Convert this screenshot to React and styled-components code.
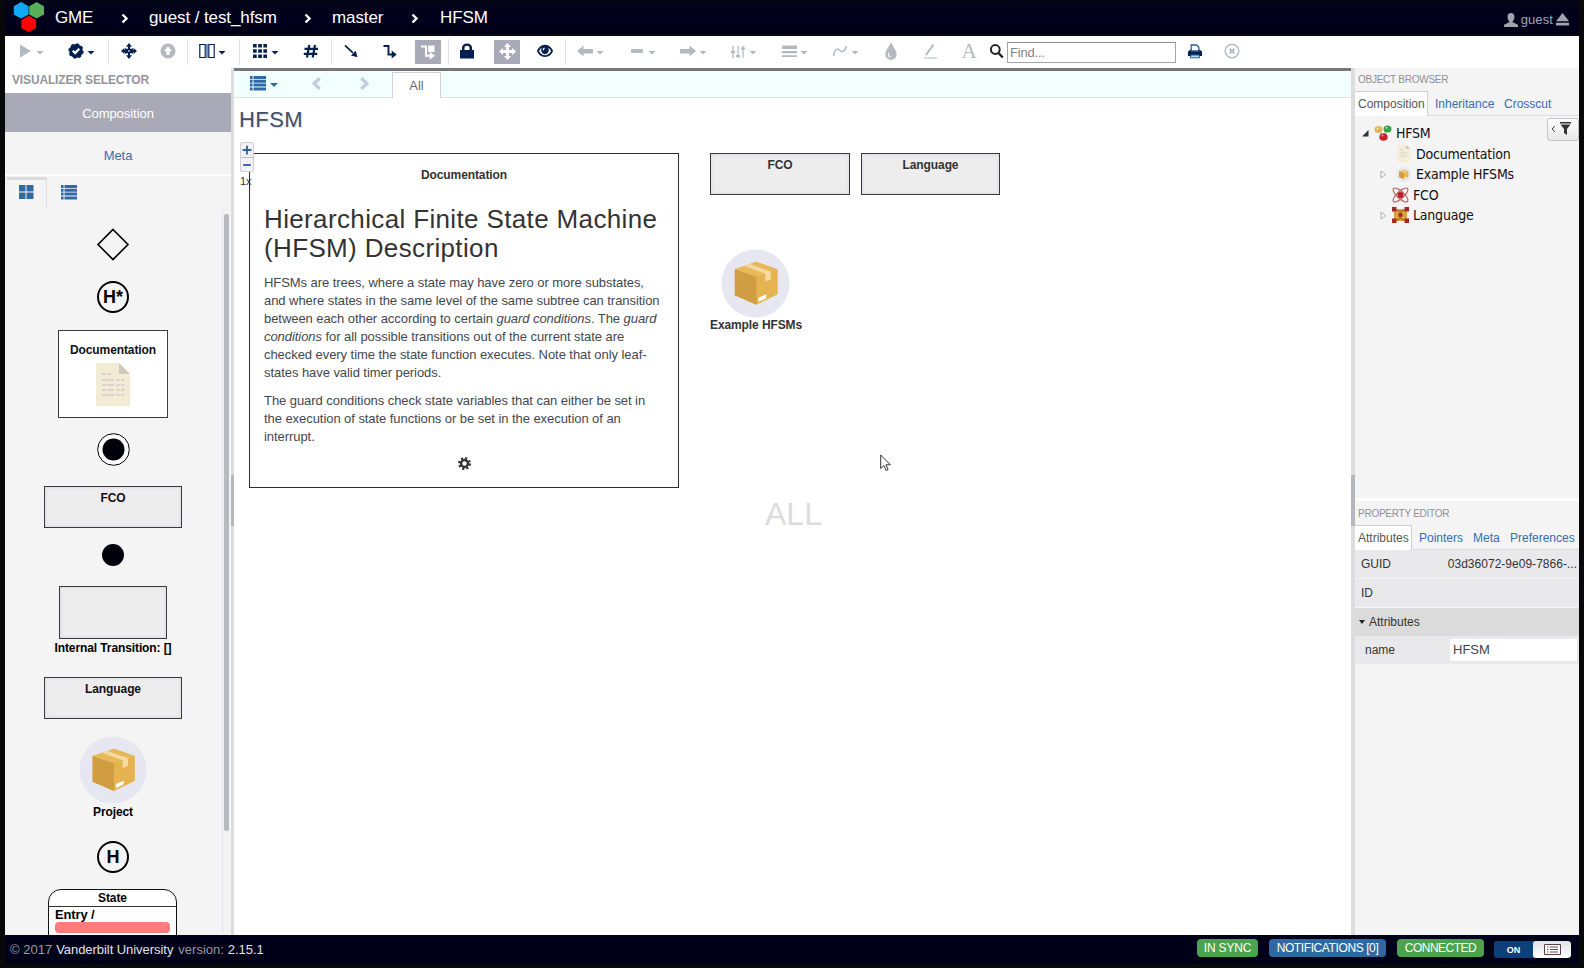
import React from "react";
import styled, { createGlobalStyle, css } from "styled-components";

const NAVY = "#04204f";
const LINK = "#3b6bb0";
const DIM = "#b4b9c1";

const GlobalStyle = createGlobalStyle`
  * { box-sizing: border-box; }
  body { margin: 0; background: #000; font-family: "Liberation Sans", Arial, sans-serif; font-size: 13px; color: #333; overflow: hidden; }
  svg { display: block; flex: none; }
`;

/* ---------- frame ---------- */
const Frame = styled.div`
  width: 1584px;
  height: 968px;
  padding: 0 5px 4px;
  background: #080808;
  display: flex;
  flex-direction: column;
`;

/* ---------- header ---------- */
const Header = styled.header`
  height: 36px;
  flex: none;
  background: linear-gradient(#030518, #00001c 60%, #000016);
  border-bottom: 2px solid #0c0c0c;
  display: flex;
  align-items: center;
  padding: 0 10px 0 8px;
  color: #fff;
`;
const Crumb = styled.span`
  font-size: 17px;
  line-height: 34px;
  padding-top: 1px;
  width: ${(p) => p.$w}px;
  letter-spacing: ${(p) => p.$ls || 0}px;
  margin-left: ${(p) => p.$gap}px;
  white-space: nowrap;
`;
const User = styled.div`
  margin-left: auto;
  display: flex;
  align-items: center;
  gap: 3px;
  padding-top: 5px;
  font-size: 13px;
  letter-spacing: 0.1px;
  color: #a3a3ad;
`;

/* ---------- main toolbar ---------- */
const Toolbar = styled.div`
  height: 32px;
  flex: none;
  background: #fff;
  display: flex;
  align-items: center;
  padding-bottom: 3px;
`;
const Tool = styled.div`
  display: flex;
  align-items: center;
  gap: 3px;
  margin-left: ${(p) => p.$gap}px;
  color: ${(p) => (p.$dim ? DIM : NAVY)};
  ${(p) =>
    p.$on &&
    css`
      width: 26px;
      height: 24px;
      justify-content: center;
      background: #a9a9b8;
      color: #fff;
      margin-top: 2px;
    `}
`;
const Caret = styled.i`
  width: 8px;
  height: 4px;
  margin-top: 4px;
  background: currentColor;
  clip-path: polygon(0 0, 100% 0, 50% 100%);
`;
const Sep = styled.div`
  width: 1px;
  height: 26px;
  margin-top: 3px;
  background: #dfdfea;
  margin-left: ${(p) => p.$gap}px;
`;
const Find = styled.div`
  width: 169px;
  height: 21px;
  margin: 3px 0 0 3px;
  border: 1px solid #a6a6a6;
  border-top-color: #8c8c8c;
  padding-left: 2px;
  line-height: 19px;
  font-size: 13px;
  letter-spacing: -0.2px;
  color: #7f8286;
`;

/* ---------- body ---------- */
const Body = styled.div`
  height: 867px;
  display: flex;
  flex: none;
`;
const Left = styled.aside`
  width: 226px;
  background: #f4f4f4;
  display: flex;
  flex-direction: column;
`;
const Splitter = styled.div`
  width: ${(p) => p.$w}px;
  background: #dcdcdc;
  padding-top: 407px;
  &::before {
    content: "";
    display: block;
    height: 51px;
    background: #b6b7bd;
  }
`;
const PanelHead = styled.div`
  height: 25px;
  line-height: 24px;
  background: #fff;
  padding-left: 7px;
  font-size: 12px;
  font-weight: bold;
  color: #94959b;
  letter-spacing: -0.15px;
`;
const VisItem = styled.div`
  height: ${(p) => (p.$on ? 39 : 42)}px;
  line-height: ${(p) => (p.$on ? 41 : 47)}px;
  text-align: center;
  font-size: 13px;
  letter-spacing: -0.05px;
  color: ${(p) => (p.$on ? "#fff" : LINK)};
  background: ${(p) => (p.$on ? "#a9a9b7" : "#f4f4f4")};
`;
const ViewTabs = styled.div`
  height: 35px;
  border-top: 2px solid #fff;
  display: flex;
  padding: 1px 0 0 2px;
  color: #326aa6;
`;
const ViewTab = styled.div`
  width: ${(p) => (p.$on ? 40 : 44)}px;
  display: flex;
  justify-content: center;
  padding-top: ${(p) => (p.$on ? 4 : 7)}px;
  ${(p) => p.$on && "border-top: 3px solid #dcdcdc; border-right: 1px solid #dedee6; padding-right: 1px;"}
`;
const PaletteRow = styled.div`
  flex: 1;
  display: flex;
  min-height: 0;
  overflow: hidden;
`;
const Palette = styled.div`
  width: 216px;
  display: flex;
  flex-direction: column;
  align-items: center;
  overflow: hidden;
  padding-top: 19px;
`;
const Track = styled.div`
  width: 9px;
  margin-left: 1px;
  padding: 5px 2px 0 1px;
  border-left: 1px solid #e6e3ee;
`;
const Thumb = styled.div`
  width: 5px;
  height: 617px;
  background: #b9bac0;
  border-radius: 2px;
`;
const Part = styled.div`
  flex: none;
  margin-top: ${(p) => p.$gap || 0}px;
  color: #000;
`;
const Label = styled.div`
  font-size: 12px;
  font-weight: bold;
  line-height: ${(p) => p.$lh || 14}px;
  text-align: center;
  white-space: nowrap;
  letter-spacing: -0.1px;
`;
const Tile = styled.div`
  flex: none;
  margin-top: ${(p) => p.$gap || 0}px;
  width: ${(p) => p.$w}px;
  height: ${(p) => p.$h}px;
  border: 1px solid #3a3a3c;
  background: #ededee;
  box-shadow: inset 0 0 3px 1px #dcdde2;
  padding-top: ${(p) => p.$pt ?? 4}px;
  color: inherit;
`;
const PaletteTile = styled(Tile)`
  color: #101014;
`;
const DocTile = styled(PaletteTile)`
  background: #fff;
  box-shadow: none;
  display: flex;
  flex-direction: column;
  align-items: center;
`;
const Ring = styled.div`
  flex: none;
  width: 32px;
  height: 32px;
  border-radius: 50%;
  border: 2px solid #000;
  margin-top: ${(p) => p.$gap}px;
  font-size: 18px;
  font-weight: bold;
  line-height: 28px;
  color: #000;
  display: flex;
  justify-content: center;
`;
const StateBox = styled.div`
  flex: none;
  width: 129px;
  height: 90px;
  margin-top: 16px;
  margin-right: 1px;
  border: 1px solid #111;
  border-radius: 13px 13px 0 0;
  background: #fff;
  color: #000;
`;
const StateHead = styled(Label)`
  height: 17px;
  line-height: 17px;
  border-bottom: 1px solid #333;
`;
const Entry = styled.div`
  padding: 1px 6px 0;
  font-size: 13px;
  font-weight: bold;
  letter-spacing: -0.15px;
  line-height: 14px;
`;
const EntryBar = styled.div`
  height: 11px;
  border-radius: 4px;
  background: #fe7b7b;
`;

/* ---------- center ---------- */
const Center = styled.main`
  flex: 1;
  background: #fff;
  display: flex;
  flex-direction: column;
  min-width: 0;
  border-top: 3px solid #77777c;
`;
const SubBar = styled.div`
  height: 27px;
  background: #f1ffff;
  border-bottom: 1px solid #e0e0f2;
  display: flex;
  flex: none;
  padding-left: 16px;
  color: #2f68a8;
`;
const SubTool = styled.div`
  display: flex;
  align-items: center;
  gap: 4px;
  height: 24px;
  margin-right: ${(p) => p.$gap}px;
  color: ${(p) => (p.$dim ? "#c3cbdc" : "inherit")};
`;
const AllTab = styled.div`
  width: 49px;
  height: 26px;
  margin-top: 1px;
  border: 1px solid #cfcfda;
  border-bottom: 0;
  background: #fff;
  text-align: center;
  line-height: 26px;
  font-size: 13px;
  color: #6a6a6a;
`;
const Canvas = styled.div`
  position: relative;
  flex: 1;
`;
const Title = styled.h1`
  margin: 0;
  padding: 8px 0 0 5px;
  font-size: 22px;
  line-height: 28px;
  font-weight: normal;
  letter-spacing: 0.4px;
  color: #445067;
  text-shadow: 1px 1px 1px #d5d8e2;
`;
const Node = styled.div`
  position: absolute;
  left: ${(p) => p.$x}px;
  top: ${(p) => p.$y}px;
`;
const DocNode = styled.article`
  width: 430px;
  height: 335px;
  border: 1px solid #2d2d2d;
  background: #fff;
  padding: 14px 14px 0 14px;
  display: flex;
  flex-direction: column;
`;
const DocHeading = styled.h2`
  margin: 23px 0 11px;
  font-size: 26px;
  line-height: 29px;
  font-weight: normal;
  color: #333;
  white-space: nowrap;
  letter-spacing: 0.36px;
`;
const Para = styled.p`
  margin: 0 0 11px;
  font-size: 13px;
  line-height: 17.9px;
  letter-spacing: -0.06px;
  color: #44474d;
  white-space: nowrap;
`;
const Gear = styled.div`
  display: flex;
  justify-content: center;
  margin-top: 0;
  color: #333;
`;
const ZoomBox = styled.div`
  width: 14px;
  border: 1px solid #cfcfd6;
  border-radius: 2px;
  background: #f2f2f6;
  color: #2f62a4;
`;
const ZoomKey = styled.div`
  height: 14px;
  display: flex;
  align-items: center;
  justify-content: center;
  & + & { border-top: 1px solid #bdbdc4; }
`;
const ZoomLevel = styled.span`
  font-size: 11px;
  line-height: 14px;
  color: #333;
`;
const Watermark = styled.span`
  font-size: 32px;
  line-height: 36px;
  color: #dcdcdc;
`;

/* ---------- right ---------- */
const Right = styled.aside`
  width: 224px;
  background: #f4f4f4;
  display: flex;
  flex-direction: column;
`;
const SmallHead = styled.div`
  height: 23px;
  line-height: 23px;
  padding-left: 3px;
  font-size: 10px;
  letter-spacing: -0.25px;
  color: #8f9096;
`;
const Tabs = styled.div`
  height: 25px;
  display: flex;
  border-bottom: 1px solid #dcdce0;
  font-size: 12px;
  line-height: 26px;
`;
const Tab = styled.div`
  color: ${(p) => (p.$on ? "#555" : LINK)};
  width: ${(p) => p.$w}px;
  padding-left: ${(p) => (p.$on ? 3 : 7)}px;
  white-space: nowrap;
  ${(p) => p.$on && "background:#fff; height:25px; border:1px solid #d0d0d4; border-left:0; border-bottom:0; line-height:24px;"}
`;
const Tree = styled.div`
  height: 382px;
  padding-top: 7px;
  position: relative;
`;
const TreeRow = styled.div`
  height: 20.5px;
  display: flex;
  align-items: center;
  padding-left: ${(p) => p.$in}px;
  font: 14px/20px "DejaVu Sans Condensed", "Noto Sans", sans-serif;
  letter-spacing: -0.2px;
  color: #111;
  svg { margin-right: ${(p) => p.$mr || 4}px; }
`;
const Expander = styled.i`
  width: 7px;
  height: 9px;
  margin-right: ${(p) => p.$mr || 5}px;
  display: flex;
  align-items: center;
  svg { margin: 0; }
`;
const FilterButton = styled.div`
  position: absolute;
  right: 0;
  top: 2px;
  width: 32px;
  height: 23px;
  border: 1px solid #c4c4c8;
  border-radius: 3px;
  background: linear-gradient(#fff, #e8e8e8);
  display: flex;
  align-items: center;
  justify-content: center;
  gap: 4px;
  padding: 0 4px 2px 0;
  color: #333;
`;
const PropHead = styled(SmallHead)`
  height: 27px;
  line-height: 25px;
  border-top: 3px solid #fff;
`;
const Prop = styled.div`
  height: ${(p) => (p.$group ? 28 : 29)}px;
  display: flex;
  align-items: center;
  padding: 0 2px ${(p) => (p.$group ? 0 : 1)}px ${(p) => p.$in || 6}px;
  background: ${(p) => (p.$group ? "#dbdbdb" : "#e9e9ec")};
  border-bottom: 1px solid ${(p) => (p.$group ? "#dbdbdb" : "#f6f6f6")};
  font-size: 12px;
  color: #333;
  gap: ${(p) => (p.$group ? 4 : 0)}px;
`;
const PropName = styled.div`
  width: ${(p) => p.$w}px;
`;
const PropValue = styled.div`
  flex: 1;
  white-space: nowrap;
  letter-spacing: 0.02px;
`;
const PropInput = styled.div`
  flex: 1;
  height: 22px;
  background: #fff;
  padding-left: 3px;
  line-height: 22px;
  font-size: 13px;
  color: #444;
`;

/* ---------- footer ---------- */
const Footer = styled.footer`
  height: 29px;
  flex: none;
  background: #000018;
  display: flex;
  align-items: center;
  padding: 0 8px 0 5px;
  color: #9a9aa4;
  font-size: 13px;
`;
const Strong = styled.span`
  color: #e3e3ea;
  margin: 0 5px 0 4px;
  letter-spacing: -0.05px;
`;
const Badge = styled.div`
  width: ${(p) => p.$w}px;
  height: 18px;
  margin: 0 ${(p) => p.$gap}px 3px 0;
  border-radius: 4px;
  background: ${(p) => (p.$blue ? "#3069a2" : "#4ba34d")};
  color: #fff;
  font-size: 12px;
  line-height: 18px;
  text-align: center;
  white-space: nowrap;
  letter-spacing: ${(p) => p.$ls || 0}px;
`;
const Badges = styled.div`
  margin-left: auto;
  display: flex;
  align-items: center;
`;
const Toggle = styled.div`
  display: flex;
  width: 77px;
  height: 17px;
  margin-bottom: 1px;
  border-radius: 3px;
  overflow: hidden;
  background: #0f3f78;
  color: #fff;
  font-size: 9px;
  font-weight: bold;
  line-height: 18px;
`;
const ToggleOn = styled.div`
  width: 39px;
  text-align: center;
`;
const ToggleKnob = styled.div`
  flex: 1;
  border-radius: 3px;
  background: linear-gradient(#e2e2e6, #fff);
  display: flex;
  align-items: center;
  justify-content: center;
`;

/* ---------- icons ---------- */
const I = ({ s = 16, children, ...r }) => (
  <svg width={s} height={s} viewBox="0 0 16 16" fill="currentColor" {...r}>{children}</svg>
);
const S = (p) => <I fill="none" stroke="currentColor" {...p} />;

const icons = {
  play: <I><path d="M3 1.500 14 8 3 14.500z" /></I>,
  check: <I><circle cx="8" cy="8" r="6.900" /><circle cx="8" cy="8" r="7" fill="none" stroke="currentColor" strokeWidth="1.400" strokeDasharray="2.750 2.750" /><path d="M4.800 7.800l2.300 2.300 4.200-4.300" fill="none" stroke="#fff" strokeWidth="2.200" /></I>,
  cross: <I><path d="M8 0l3 3.700H9v2.100h1.700L12.300 5V7H12.800V5.300L16 8l-3.200 2.700V9H12.300v2l-1.600-.8H9v2.100h2L8 16l-3-3.700h2v-2.100H5.300l-1.600.8V9H3.200v1.700L0 8l3.200-2.700V7h.5V5l1.600.8H7V3.700H5z" /><path d="M7.300 7.300h1.400v1.400H7.300z" fill="#fff" /></I>,
  up: <I><path fillRule="evenodd" d="M8 .5a7.500 7.500 0 1 0 0 15 7.500 7.500 0 0 0 0-15zM8 3.500l4 4.500H9.600v4H6.400V8H4z" /></I>,
  columns: <S strokeWidth="1.200"><path d="M.8 1.500h5.400v13H.8zM9.800 1.500h5.400v13H9.800z" /><path d="M8 1v14" strokeWidth="1.600" stroke="#4b7cab" /></S>,
  th: <I><path d="M1 1h3.700v3.600H1zM6.200 1h3.700v3.600H6.200zM11.400 1H15v3.600h-3.600zM1 6.200h3.700v3.600H1zM6.200 6.200h3.700v3.600H6.200zM11.400 6.200H15v3.600h-3.600zM1 11.400h3.700V15H1zM6.200 11.400h3.700V15H6.200zM11.400 11.400H15V15h-3.600z" /></I>,
  hash: <S strokeWidth="2.200"><path d="M6.300 2 4 14.500M12 2 9.700 14.500M1.500 5.800h13.500M.800 10.800h13.500" /></S>,
  arrow: <S strokeWidth="1.800"><path d="M2 2.300l8 7.500" /><path d="M14.500 14.200l-1.800-6.500-4.800 4.900z" fill="currentColor" stroke="none" /></S>,
  elbow: <S strokeWidth="1.900"><path d="M1.500 3h5v8.500H11" /><path d="M9.700 7.500l5 4-5 4z" fill="currentColor" stroke="none" /></S>,
  boxed: <S strokeWidth="2"><path d="M1 2.500h5v9.200h5" /><path d="M9.700 7.800l5.300 4-5.300 4z" fill="currentColor" stroke="none" /><path d="M8.200 1.500H14.500V8H8.200z" fill="currentColor" stroke="none" /></S>,
  lock: <I><path fillRule="evenodd" d="M1 7h2V4.500C3 2.200 5 .5 8 .5s5 1.700 5 4V7h2v8.500H1zM5.500 7h5V4.800C10.500 3.500 9.600 2.700 8 2.700S5.500 3.500 5.500 4.800z" /></I>,
  move: <I s={17}><path d="M8 0l3.400 3.700H9.300v3h3V4.600L16 8l-3.700 3.400V9.300h-3v3h2.100L8 16l-3.400-3.700h2.100v-3h-3v2.100L0 8l3.700-3.400v2.100h3v-3H4.600z" /></I>,
  eye: <I><path fillRule="evenodd" d="M8 1.800C4 1.800 1 5 0 8c1 3 4 6 8 6s7-3 8-6c-1-3-4-6.200-8-6.200zM2 8.200C2.500 7 3.500 5.600 4.700 4.800 4.200 6 4 7.500 4.500 8.800 5.200 10.400 6.500 11.300 8 11.300s2.800-.9 3.500-2.500c.5-1.300.3-2.800-.2-4C12.500 5.600 13.500 7 14 8.200c-1.200 2.300-3.300 4-6 4s-4.800-1.700-6-4zM7.500 4.500a2.500 2.500 0 0 0-1.700 3l1.200-.3c-.2-.8.200-1.500.9-1.800z" /></I>,
  left: <I><path d="M0 8l6.500-5.500V6H16v4.500H6.500v3z" /></I>,
  minus: <I><rect x="2" y="6" width="12" height="4" rx="1" /></I>,
  right: <I><path d="M16 8 9.500 2.500V6H0v4.500h9.500v3z" /></I>,
  sliders: <S strokeWidth="1.300"><path d="M3 3v12M8 3v12M13 3v12" /><path d="M1 9h4M6 13h4M11 5.500h4" strokeWidth="2.200" /></S>,
  lines: <I><path d="M1 2.500h15v3.500H1zM1 8h15v2.300H1zM1 12.300h15v1.700H1z" /></I>,
  curve: <S strokeWidth="1.500"><path d="M1.500 13C3 5 5.500 5 8 7.500S13 8 14.500 3" /></S>,
  tint: <I s={18}><path fillRule="evenodd" d="M8 0C9 4 13 6.500 13 11a5 5 0 0 1-10 0C3 6.500 7 4 8 0zM5.500 9.500C4.800 11 5.500 13.500 7.500 14V12.800C6.300 12.200 6 10.800 6.300 9.500z" /></I>,
  pencil: <S strokeWidth="2"><path d="M11.500 1.500 4 12" /><path d="M2 15h13" strokeWidth="1" /></S>,
  search: <S strokeWidth="2" stroke="#222"><circle cx="7.300" cy="6.500" r="4.400" /><path d="M10.500 10l4.300 4.500" strokeWidth="2.400" /></S>,
  print: <I><path d="M1 8.500 3.500 6.500h9L15 8.500V13H1z" /><path d="M4.200 8V2h5.300l2.300 2v4z" fill="#fff" stroke="#2c5f98" strokeWidth="1.300" /><path d="M4 12h8l.8 2.800H3.200z" fill="#b9d4ee" stroke="#2c5f98" /></I>,
  close: <S strokeWidth="1.500"><circle cx="8" cy="8" r="6.800" /><path d="M5.600 5.600l4.800 4.800M10.400 5.600l-4.800 4.800" strokeWidth="2" /></S>,
};
const ListIcon = () => (
  <I><path d="M0 1h2.600v3H0zM3.500 1H16v3H3.500zM0 4.800h2.600v3H0zM3.500 4.800H16v3H3.500zM0 8.600h2.600v3H0zM3.500 8.600H16v3H3.500zM0 12.400h2.600v3H0zM3.500 12.400H16v3H3.500z" /></I>
);
const Chevron = ({ flip }) => (
  <S s={13} strokeWidth="4"><path d={flip ? "M4 1.500 11 8l-7 6.500" : "M12 1.500 5 8l7 6.500"} /></S>
);
const CrumbArrow = styled.svg.attrs({ width: 8, height: 11, viewBox: "0 0 8 11", children: <path d="M1.500 1.500l4 4-4 4" fill="none" stroke="#fff" strokeWidth="2.400" /> })`
  margin: 2px 0 0 ${(p) => p.$gap}px;
`;
const hex = (cx, cy) =>
  `M${cx} ${cy - 8.2}l7.400 4.100v8.200l-7.400 4.100-7.400-4.100v-8.200z`;
const Logo = () => (
  <svg width="32" height="31" viewBox="0 0 32 31">
    <path d={hex(8.2, 8.3)} fill="#0fa8f5" />
    <path d={hex(23.6, 8.3)} fill="#58b158" />
    <path d={hex(15.8, 22)} fill="#fb0505" />
  </svg>
);
const Package = ({ s = 70 }) => (
  <svg width={s} height={s} viewBox="0 0 70 70">
    <circle cx="35" cy="35" r="34.500" fill="#e6e7f0" />
    <path d="M14 20.500 36 13l21.500 7.500V46L36 56.500 14 47z" fill="#e5b350" />
    <path d="M14 20.500 36 28v28.500L14 47z" fill="#d19d42" />
    <path d="M14 20.500 36 13l21.500 7.500L36 28z" fill="#e8b95a" />
    <path d="M23.500 17.300l5.500-2L50.500 23v8l-5.500 2v-8z" fill="#f5dba3" />
    <path d="M38 49.500l8-3.500v4l-8 3.500z" fill="#fff" />
  </svg>
);
const DocIcon = () => (
  <svg width="34" height="43" viewBox="0 0 34 43">
    <path d="M0 0h23l11 11v32H0z" fill="#f3ecd5" />
    <path d="M23 0l11 11H23z" fill="#d0c8bb" />
    <path d="M6 11h9M6 17h22M6 22h22M6 27h23M6 32h22" stroke="#d9d3d2" strokeWidth="2" strokeDasharray="4 1 7 2" />
  </svg>
);
const GearIcon = () => (
  <S s={13}><circle cx="8" cy="8" r="4.300" strokeWidth="3" /><circle cx="8" cy="8" r="6.700" strokeWidth="2.600" strokeDasharray="2.630 2.630" /></S>
);
const treeIcons = {
  root: <svg width="18" height="16" viewBox="0 0 18 16"><path d="M4 5l5 6 5-6" stroke="#999" fill="none" /><ellipse cx="4.500" cy="4.500" rx="4" ry="3.500" fill="#dfb45a" /><ellipse cx="13.500" cy="4" rx="4" ry="3.500" fill="#35a34a" /><ellipse cx="9.500" cy="12" rx="4.200" ry="3.800" fill="#c9202c" /><circle cx="8.500" cy="10.500" r="1" fill="#ff9c9c" /><circle cx="3.500" cy="3.500" r="1" fill="#fff0b8" /><circle cx="12.500" cy="2.800" r="1" fill="#b5efb5" /></svg>,
  doc: <svg width="13" height="17" viewBox="0 0 13 17"><path d="M0 0h9l4 4v13H0z" fill="#f4edd8" /><path d="M9 0l4 4H9z" fill="#c9c4c0" /><path d="M3 5h4M3 8h7M3 11h7" stroke="#d8d4cc" /></svg>,
  pack: <Package s={15} />,
  fco: <svg width="17" height="16" viewBox="0 0 17 16"><g fill="none" stroke="#b9666a" strokeWidth="1.200"><ellipse cx="8.500" cy="8" rx="9.500" ry="3.500" transform="rotate(43 8.500 8)" /><ellipse cx="8.500" cy="8" rx="9.500" ry="3.500" transform="rotate(-43 8.500 8)" /></g><circle cx="8.500" cy="8" r="3" fill="#b3202a" /></svg>,
  lang: <svg width="17" height="16" viewBox="0 0 17 16"><path d="M2 2h13v12H2z" fill="#dca33a" /><path d="M5 3l3 2 4-2M5 13l3-2 4 2" stroke="#8a5a10" fill="none" /><g fill="#a3282c"><path d="M0 0h4.500v4.500H0zM12.500 0H17v4.500h-4.500zM0 11.500h4.500V16H0zM12.500 11.500H17V16h-4.500z" /><circle cx="8.500" cy="8" r="2.200" /></g></svg>,
};
const Closed = () => (
  <svg width="7" height="9" viewBox="0 0 7 9"><path d="M1 1l4.500 3.500L1 8z" fill="#fff" stroke="#aaa" /></svg>
);
const Open = () => (
  <svg width="7" height="8" viewBox="0 0 7 8"><path d="M6.500 1v6.500H0z" fill="#333" /></svg>
);

/* gap is the space before each item; "|" draws a separator */
const tools = [
  ["play", 12, "dc"], ["check", 24, "c"], ["|", 13], ["cross", 12], ["up", 23, "d"], ["|", 11],
  ["columns", 11, "c"], ["|", 13], ["th", 12, "c"], ["hash", 24], ["|", 12], ["arrow", 11],
  ["elbow", 23], ["boxed", 17, "o"], ["|", 7], ["lock", 10], ["move", 19, "o"], ["eye", 17], ["|", 12],
  ["left", 11, "dc"], ["minus", 25, "dc"], ["right", 24, "dc"], ["sliders", 23, "dc"],
  ["lines", 24, "dc"], ["curve", 24, "dc"], ["tint", 23, "d"], ["pencil", 22, "d"],
];
const Glyph = styled.span`
  width: 16px;
  font: 21px/20px "Liberation Serif", serif;
  text-align: center;
`;

const MainToolbar = () => (
  <Toolbar>
    {tools.map(([name, gap, flags = ""], i) =>
      name === "|" ? (
        <Sep key={i} $gap={gap} />
      ) : (
        <Tool key={i} $gap={gap} $dim={flags.includes("d")} $on={flags.includes("o")}>
          {icons[name]}
          {flags.includes("c") && <Caret />}
        </Tool>
      )
    )}
    <Tool $gap={23} $dim><Glyph>A</Glyph></Tool>
    <Tool $gap={11}>{icons.search}</Tool>
    <Find>Find...</Find>
    <Tool $gap={11}>{icons.print}</Tool>
    <Tool $gap={21} $dim>{icons.close}</Tool>
  </Toolbar>
);

const LeftPanel = () => (
  <Left>
    <PanelHead>VISUALIZER SELECTOR</PanelHead>
    <VisItem $on>Composition</VisItem>
    <VisItem>Meta</VisItem>
    <ViewTabs>
      <ViewTab $on>
        <I><path d="M1 1h6.500v6.500H1zM8.500 1H15.500v6.500H8.500zM1 8.500h6.500V15H1zM8.500 8.500H15.500V15H8.500z" /></I>
      </ViewTab>
      <ViewTab><ListIcon /></ViewTab>
    </ViewTabs>
    <PaletteRow>
      <Palette>
        <Part>
          <svg width="34" height="33" viewBox="0 0 34 33"><path d="M17 1.500l15 15-15 15-15-15z" fill="none" stroke="#000" strokeWidth="1.600" /></svg>
        </Part>
        <Ring $gap={20}>H*</Ring>
        <DocTile $gap={17} $w={110} $h={88} $pt={12}>
          <Label>Documentation</Label>
          <Part $gap={6}><DocIcon /></Part>
        </DocTile>
        <Part $gap={15}>
          <svg width="33" height="33" viewBox="0 0 33 33"><circle cx="16.500" cy="16.500" r="15.800" fill="#fff" stroke="#000" /><circle cx="16.500" cy="16.500" r="11" fill="#00000a" /></svg>
        </Part>
        <PaletteTile $gap={20} $w={138} $h={42}><Label>FCO</Label></PaletteTile>
        <Part $gap={16}>
          <svg width="22" height="22" viewBox="0 0 22 22"><circle cx="11" cy="11" r="11" fill="#00000a" /></svg>
        </Part>
        <PaletteTile $gap={20} $w={108} $h={53} />
        <Part><Label $lh={18}>Internal Transition: []</Label></Part>
        <PaletteTile $gap={20} $w={138} $h={42}><Label>Language</Label></PaletteTile>
        <Part $gap={17}><Package s={68} /></Part>
        <Part><Label $lh={16}>Project</Label></Part>
        <Ring $gap={21}>H</Ring>
        <StateBox>
          <StateHead>State</StateHead>
          <Entry>Entry /<EntryBar /></Entry>
        </StateBox>
      </Palette>
      <Track><Thumb /></Track>
    </PaletteRow>
  </Left>
);

const CenterPanel = () => (
  <Center>
    <SubBar>
      <SubTool $gap={32}><ListIcon /><Caret /></SubTool>
      <SubTool $gap={35} $dim><Chevron /></SubTool>
      <SubTool $gap={21} $dim><Chevron flip /></SubTool>
      <AllTab>All</AllTab>
    </SubBar>
    <Canvas>
      <Title>HFSM</Title>
      <Node $x={15} $y={55}>
        <DocNode>
          <Label>Documentation</Label>
          <DocHeading>Hierarchical Finite State Machine<br />(HFSM) Description</DocHeading>
          <Para>
            HFSMs are trees, where a state may have zero or more substates,<br />
            and where states in the same level of the same subtree can transition<br />
            between each other according to certain <em>guard conditions</em>. The <em>guard<br />
            conditions</em> for all possible transitions out of the current state are<br />
            checked every time the state function executes. Note that only leaf-<br />
            states have valid timer periods.
          </Para>
          <Para>
            The guard conditions check state variables that can either be set in<br />
            the execution of state functions or be set in the execution of an<br />
            interrupt.
          </Para>
          <Gear><GearIcon /></Gear>
        </DocNode>
      </Node>
      <Node $x={476} $y={55}><Tile $w={140} $h={42}><Label>FCO</Label></Tile></Node>
      <Node $x={627} $y={55}><Tile $w={139} $h={42}><Label>Language</Label></Tile></Node>
      <Node $x={487} $y={151}><Package s={69} /></Node>
      <Node $x={476} $y={220}><Label>Example HFSMs</Label></Node>
      <Node $x={6} $y={44}>
        <ZoomBox>
          <ZoomKey><S s={10} strokeWidth="3"><path d="M8 1v14M1 8h14" /></S></ZoomKey>
          <ZoomKey><S s={10} strokeWidth="3"><path d="M2 8h12" /></S></ZoomKey>
        </ZoomBox>
      </Node>
      <Node $x={6} $y={75}><ZoomLevel>1x</ZoomLevel></Node>
      <Node $x={531} $y={398}><Watermark>ALL</Watermark></Node>
      <Node $x={646} $y={356}>
        <svg width="12" height="18" viewBox="0 0 12 18"><path d="M.7 1v13.500l3.200-3 2.200 5 2-.9-2.200-4.800h4.500z" fill="#fff" stroke="#333" /></svg>
      </Node>
    </Canvas>
  </Center>
);

const RightPanel = () => (
  <Right>
    <SmallHead>OBJECT BROWSER</SmallHead>
    <Tabs>
      <Tab $on $w={73}>Composition</Tab>
      <Tab $w={69}>Inheritance</Tab>
      <Tab $w={70}>Crosscut</Tab>
    </Tabs>
    <Tree>
      <TreeRow $in={7}><Expander><Open /></Expander>{treeIcons.root}HFSM</TreeRow>
      <TreeRow $in={42} $mr={6}>{treeIcons.doc}Documentation</TreeRow>
      <TreeRow $in={25} $mr={5}><Expander $mr={9}><Closed /></Expander>{treeIcons.pack}Example HFSMs</TreeRow>
      <TreeRow $in={37}>{treeIcons.fco}FCO</TreeRow>
      <TreeRow $in={25}><Expander><Closed /></Expander>{treeIcons.lang}Language</TreeRow>
      <FilterButton>
        <svg width="5" height="8" viewBox="0 0 5 8"><path d="M4 1 1 4l3 3" fill="none" stroke="#444" /></svg>
        <svg width="11" height="13" viewBox="0 0 11 13"><path d="M0 0h11v1.500H0zM.5 2.500h10L7 7v6L4 11V7z" fill="#333" /></svg>
      </FilterButton>
    </Tree>
    <PropHead>PROPERTY EDITOR</PropHead>
    <Tabs>
      <Tab $on $w={57}>Attributes</Tab>
      <Tab $w={54}>Pointers</Tab>
      <Tab $w={37}>Meta</Tab>
      <Tab $w={74}>Preferences</Tab>
    </Tabs>
    <Prop><PropName $w={87}>GUID</PropName><PropValue>03d36072-9e09-7866-...</PropValue></Prop>
    <Prop>ID</Prop>
    <Prop $group $in={4}>
      <svg width="6" height="4" viewBox="0 0 6 4"><path d="M0 0h6L3 4z" fill="#222" /></svg>
      Attributes
    </Prop>
    <Prop $in={10}><PropName $w={85}>name</PropName><PropInput>HFSM</PropInput></Prop>
  </Right>
);

export default function App() {
  return (
    <Frame>
      <GlobalStyle />
      <Header>
        <Logo />
        <Crumb $gap={10} $w={40} $ls={-0.2}>GME</Crumb>
        <CrumbArrow $gap={26} />
        <Crumb $gap={20} $w={129} $ls={-0.1}>guest / test_hfsm</Crumb>
        <CrumbArrow $gap={26} />
        <Crumb $gap={20} $w={53} $ls={-0.1}>master</Crumb>
        <CrumbArrow $gap={26} />
        <Crumb $gap={21} $w={50} $ls={-0.1}>HFSM</Crumb>
        <User>
          <I s={14}><path d="M8 0c2.500 0 4 1.800 4 4.500 0 2-1 3.800-2 4.700v1.300l5.500 2.500c.5.300.5 1 .5 3H0c0-2 0-2.700.5-3L6 10.500V9.200C5 8.300 4 6.500 4 4.500 4 1.800 5.500 0 8 0z" /></I>
          guest
          <I s={13}><path d="M8 0l8 10H0zM0 12h16v3.500H0z" /></I>
        </User>
      </Header>
      <MainToolbar />
      <Body>
        <LeftPanel />
        <Splitter $w={3} />
        <CenterPanel />
        <Splitter $w={4} />
        <RightPanel />
      </Body>
      <Footer>
        © 2017<Strong>Vanderbilt University</Strong>version:<Strong>2.15.1</Strong>
        <Badges>
          <Badge $w={61} $gap={11} $ls={-0.2}>IN SYNC</Badge>
          <Badge $w={117} $gap={11} $blue $ls={-0.4}>NOTIFICATIONS [0]</Badge>
          <Badge $w={87} $gap={10} $ls={-0.5}>CONNECTED</Badge>
          <Toggle>
            <ToggleOn>ON</ToggleOn>
            <ToggleKnob>
              <svg width="17" height="11" viewBox="0 0 17 11"><path d="M.5.500h16v10H.5z" fill="#fff" stroke="#5b3d44" /><path d="M3 3h1.500M6 3h8M3 5.500h1.500M6 5.500h8M3 8h1.500M6 8h8" stroke="#555" /></svg>
            </ToggleKnob>
          </Toggle>
        </Badges>
      </Footer>
    </Frame>
  );
}
